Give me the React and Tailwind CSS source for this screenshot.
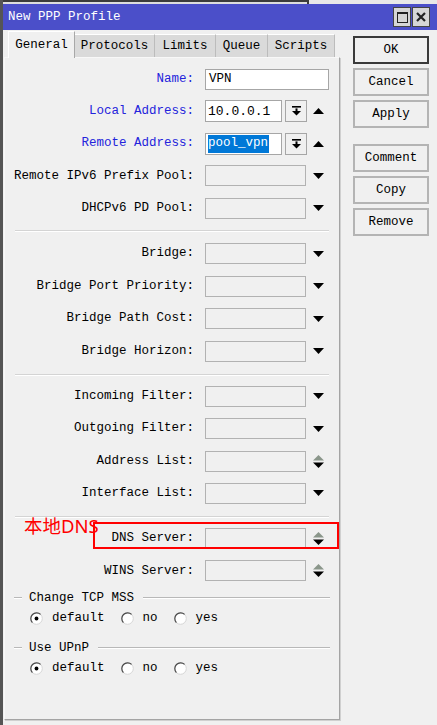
import React from "react";

const Down = () => (
  <svg width="11" height="6" viewBox="0 0 11 6"><polygon points="0,0 11,0 5.5,6" fill="#000" /></svg>
);
const Up = () => (
  <svg width="11" height="6" viewBox="0 0 11 6"><polygon points="0,6 11,6 5.5,0" fill="#000" /></svg>
);
const Spin = () => (
  <svg width="11" height="13" viewBox="0 0 11 13">
    <polygon points="0,5.5 11,5.5 5.5,0" fill="#8a968a" />
    <polygon points="0,7.5 11,7.5 5.5,13" fill="#000" />
  </svg>
);
const DropBtnIcon = () => (
  <svg width="9" height="10" viewBox="0 0 9 10">
    <rect x="0" y="0" width="9" height="1.6" fill="#000" />
    <rect x="3.5" y="2.4" width="2" height="3" fill="#000" />
    <polygon points="0,5 9,5 4.5,9.5" fill="#000" />
  </svg>
);

const Radio = ({ checked }) => (
  <svg width="13" height="13" viewBox="0 0 13 13">
    <circle cx="6.5" cy="6.5" r="5.8" fill="#fff" stroke="#d6d6d6" />
    <path d="M2.4 10.6 A5.8 5.8 0 0 1 10.6 2.4" stroke="#4a4a4a" strokeWidth="1.2" fill="none" />
    {checked && <circle cx="6.5" cy="6.5" r="1.9" fill="#000" />}
  </svg>
);

function Label({ text, blue }) {
  return (
    <div className={"w-[189px] text-right whitespace-nowrap " + (blue ? "text-[#2323dc]" : "text-black")}>
      {text}:
    </div>
  );
}

function Box() {
  return <div className="w-[101px] h-[21px] border border-[#b2b2b2] bg-[#f0f0f0]" />;
}

function Sep() {
  return (
    <div className="ml-[10px] w-[314px] h-[2px] border-t border-[#d4d4d4] border-b border-b-white" />
  );
}

function GroupHead({ text }) {
  return (
    <div className="flex items-center h-[20px]">
      <div className="ml-[9px] w-[8px] h-[2px] border-t border-[#b8b8b8] border-b border-b-white" />
      <div className="ml-[7px] whitespace-nowrap">{text}</div>
      <div className="ml-[9px] flex-1 mr-[9px] h-[2px] border-t border-[#b8b8b8] border-b border-b-white" />
    </div>
  );
}

function Radios() {
  return (
    <div className="flex items-center h-[20px] pl-[25px]">
      <Radio checked />
      <span className="ml-[9px]">default</span>
      <span className="ml-[16px] flex items-center"><Radio /></span>
      <span className="ml-[9px]">no</span>
      <span className="ml-[16px] flex items-center"><Radio /></span>
      <span className="ml-[9px]">yes</span>
    </div>
  );
}

function Btn({ children, def }) {
  return (
    <div
      className={
        "w-[76px] h-[28px] flex items-center justify-center bg-[#f0f0f0] " +
        (def ? "border-2 border-[#3a3a3a]" : "border-2 border-[#b4b4b4]")
      }
    >
      {children}
    </div>
  );
}

export default function App() {
  return (
    <div className="w-[437px] h-[725px] bg-[#f0f0f0] border-l-[3px] border-[#555] relative overflow-hidden font-[family-name:'Liberation_Mono','Courier_New',monospace] text-[12.5px] text-black leading-none">
      {/* top strip */}
      <div className="h-[4px] flex">
        <div className="w-[304px] border-t-2 border-[#3c3c3c] bg-[#dedede]" />
        <div className="flex-1 border-l-2 border-[#3c3c3c] bg-[#e8e8e8]" />
      </div>
      {/* title bar */}
      <div className="h-[26px] bg-[#4b4fc9] flex items-center pl-[5px] pr-[7px]">
        <div className="text-white text-[12.5px]">New PPP Profile</div>
        <div className="ml-auto flex gap-[1px]">
          <div className="w-[18px] h-[20px] bg-[#d6d6d6] border border-[#444] flex items-center justify-center">
            <div className="w-[11px] h-[11px] border border-[#222] border-t-2" />
          </div>
          <div className="w-[18px] h-[20px] bg-[#d6d6d6] border border-[#444] flex items-center justify-center">
            <svg width="10" height="10" viewBox="0 0 10 10">
              <path d="M1 1 L9 9 M9 1 L1 9" stroke="#222" strokeWidth="2.2" />
            </svg>
          </div>
        </div>
      </div>
      {/* body */}
      <div className="flex">
        {/* left column */}
        <div className="ml-[1px] w-[336px] mt-[1px]">
          <div className="flex items-end h-[26px] pl-[4px]">
            <div className="w-[67px] h-[27px] -mb-px relative z-10 bg-[#f0f0f0] border-l border-t border-white border-r border-r-[#a8a8a8] flex items-center justify-center">
              General
            </div>
            <div className="w-[80px] h-[23px] bg-[#dadada] border-t border-white border-r border-r-[#bcbcbc] flex items-center justify-center">
              Protocols
            </div>
            <div className="w-[61px] h-[23px] bg-[#dadada] border-t border-white border-r border-r-[#bcbcbc] flex items-center justify-center">
              Limits
            </div>
            <div className="w-[52px] h-[23px] bg-[#dadada] border-t border-white border-r border-r-[#bcbcbc] flex items-center justify-center">
              Queue
            </div>
            <div className="w-[67px] h-[23px] bg-[#dadada] border-t border-white border-r border-r-[#bcbcbc] flex items-center justify-center">
              Scripts
            </div>
          </div>
          <div className="h-[663px] border border-[#f8f8f8] border-r-[#a4a4a4] border-b-[#a4a4a4] shadow-[1px_1px_0_#d0d0d0] pt-[5px]">
            {/* Name */}
            <div className="flex items-center h-[32.25px]">
              <Label text="Name" blue />
              <div className="ml-[11px] w-[124px] h-[21px] border border-[#a6a6a6] bg-white flex items-center pl-[3px]">VPN</div>
            </div>
            <div className="flex items-center h-[32.25px]">
              <Label text="Local Address" blue />
              <div className="ml-[11px] w-[77px] h-[22px] border border-[#a6a6a6] bg-white flex items-center pl-[2px] text-[13px]">10.0.0.1</div>
              <div className="ml-[3px] w-[22px] h-[22px] border border-[#a6a6a6] bg-[#f0f0f0] flex items-center justify-center"><DropBtnIcon /></div>
              <div className="ml-[6px] flex items-center"><Up /></div>
            </div>
            <div className="flex items-center h-[32.25px]">
              <Label text="Remote Address" blue />
              <div className="ml-[11px] w-[77px] h-[22px] border border-[#a6a6a6] bg-white flex items-center pl-[2px]">
                <span className="bg-[#0078d7] text-white h-[18px] flex items-center pr-[1px]">pool_vpn</span>
              </div>
              <div className="ml-[3px] w-[22px] h-[22px] border border-[#a6a6a6] bg-[#f0f0f0] flex items-center justify-center"><DropBtnIcon /></div>
              <div className="ml-[6px] flex items-center"><Up /></div>
            </div>
            <div className="flex items-center h-[32.25px]">
              <Label text="Remote IPv6 Prefix Pool" />
              <div className="ml-[11px]"><Box /></div>
              <div className="ml-[7px] flex items-center"><Down /></div>
            </div>
            <div className="flex items-center h-[32.25px]">
              <Label text="DHCPv6 PD Pool" />
              <div className="ml-[11px]"><Box /></div>
              <div className="ml-[7px] flex items-center"><Down /></div>
            </div>
            <div className="pt-[6px] pb-[5px]"><Sep /></div>
            {["Bridge", "Bridge Port Priority", "Bridge Path Cost", "Bridge Horizon"].map((l) => (
              <div key={l} className="flex items-center h-[32.6px]">
                <Label text={l} />
                <div className="ml-[11px]"><Box /></div>
                <div className="ml-[7px] flex items-center"><Down /></div>
              </div>
            ))}
            <div className="pt-[6px] pb-[4.5px]"><Sep /></div>
            {[["Incoming Filter", 0], ["Outgoing Filter", 0], ["Address List", 1], ["Interface List", 0]].map(([l, s]) => (
              <div key={l} className="flex items-center h-[32.4px]">
                <Label text={l} />
                <div className="ml-[11px]"><Box /></div>
                <div className="ml-[7px] flex items-center">{s ? <Spin /> : <Down />}</div>
              </div>
            ))}
            <div className="pt-[6px] pb-[4.5px]"><Sep /></div>
            {["DNS Server", "WINS Server"].map((l) => (
              <div key={l} className="flex items-center h-[32.5px]">
                <Label text={l} />
                <div className="ml-[11px]"><Box /></div>
                <div className="ml-[7px] flex items-center"><Spin /></div>
              </div>
            ))}
            <div className="mt-[1px]"><GroupHead text="Change TCP MSS" /></div>
            <Radios />
            <div className="mt-[10px]"><GroupHead text="Use UPnP" /></div>
            <Radios />
          </div>
        </div>
        {/* right column */}
        <div className="ml-[13px] mt-[6px] flex flex-col gap-[4px]">
          <Btn def>OK</Btn>
          <Btn>Cancel</Btn>
          <Btn>Apply</Btn>
          <div className="h-[8px]" />
          <Btn>Comment</Btn>
          <Btn>Copy</Btn>
          <Btn>Remove</Btn>
        </div>
      </div>
      {/* annotation overlay */}
      <div className="absolute left-[21px] top-[517px] text-[#ff0000] text-[18.5px] font-[family-name:'Noto_Sans','Noto_Sans_CJK_SC',sans-serif] leading-none">本地DNS</div>
      <div className="absolute left-[90px] top-[522px] w-[246px] h-[27px] border-2 border-[#ff0000]" />
    </div>
  );
}
